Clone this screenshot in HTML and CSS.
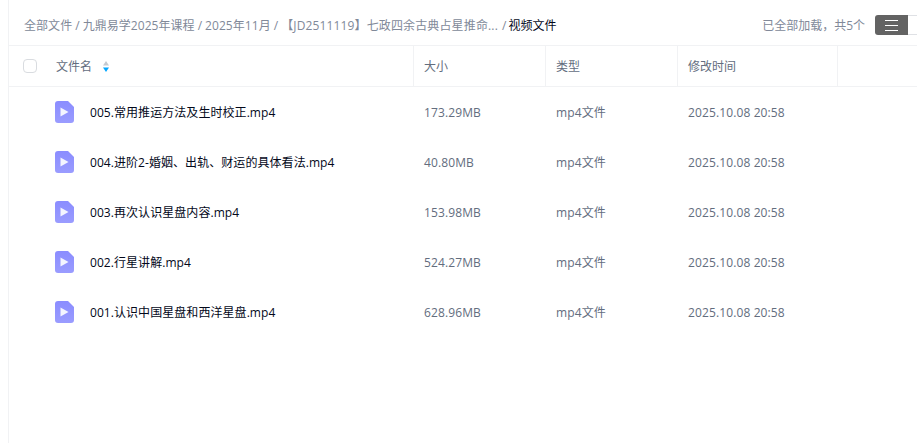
FILE: index.html
```html
<!DOCTYPE html>
<html lang="zh-CN">
<head>
<meta charset="utf-8">
<title>视频文件</title>
<link rel="stylesheet" href="styles.css">
</head>
<body>
<div class="panel">
  <div class="topbar">
    <div class="crumbs">
      <span>全部文件</span><i>/</i><span>九鼎易学2025年课程</span><i>/</i><span>2025年11月</span><i>/</i><span class="long">【JD2511119】七政四余古典占星推命...</span><i class="last">/</i><span class="current">视频文件</span>
    </div>
    <div class="status">已全部加载，共5个</div>
    <div class="switch">
      <div class="switch-on">
        <svg width="13" height="11" viewBox="0 0 13 11"><path d="M0 .5h13M0 5.5h13M0 10.5h13" stroke="#fff" stroke-width="1" fill="none"/></svg>
      </div>
      <div class="switch-off"></div>
    </div>
  </div>
  <div class="row head">
    <div class="cell name-head">
      <span class="check"></span>
      <span class="title">文件名</span>
      <svg class="sort" width="6" height="11" viewBox="0 0 6 11"><path d="M3 0 6 4.5H0z" fill="#c4c9cf"/><path d="M0 6.5h6L3 11z" fill="#06a7ff"/></svg>
    </div>
    <div class="cell">大小</div>
    <div class="cell">类型</div>
    <div class="cell">修改时间</div>
    <div class="cell end"></div>
  </div>
  <div class="list">
    <div class="row item">
      <div class="name"><svg class="ficon" width="19" height="22" viewBox="0 0 19 22"><use href="#video"/></svg><span>005.常用推运方法及生时校正.mp4</span></div>
      <div class="val">173.29MB</div><div class="val">mp4文件</div><div class="val">2025.10.08 20:58</div>
    </div>
    <div class="row item">
      <div class="name"><svg class="ficon" width="19" height="22" viewBox="0 0 19 22"><use href="#video"/></svg><span>004.进阶2-婚姻、出轨、财运的具体看法.mp4</span></div>
      <div class="val">40.80MB</div><div class="val">mp4文件</div><div class="val">2025.10.08 20:58</div>
    </div>
    <div class="row item">
      <div class="name"><svg class="ficon" width="19" height="22" viewBox="0 0 19 22"><use href="#video"/></svg><span>003.再次认识星盘内容.mp4</span></div>
      <div class="val">153.98MB</div><div class="val">mp4文件</div><div class="val">2025.10.08 20:58</div>
    </div>
    <div class="row item">
      <div class="name"><svg class="ficon" width="19" height="22" viewBox="0 0 19 22"><use href="#video"/></svg><span>002.行星讲解.mp4</span></div>
      <div class="val">524.27MB</div><div class="val">mp4文件</div><div class="val">2025.10.08 20:58</div>
    </div>
    <div class="row item">
      <div class="name"><svg class="ficon" width="19" height="22" viewBox="0 0 19 22"><use href="#video"/></svg><span>001.认识中国星盘和西洋星盘.mp4</span></div>
      <div class="val">628.96MB</div><div class="val">mp4文件</div><div class="val">2025.10.08 20:58</div>
    </div>
  </div>
</div>
<svg class="defs" width="0" height="0">
  <defs>
    <linearGradient id="vg" x1="0" y1="0" x2="0" y2="1"><stop offset="0" stop-color="#8b8dff"/><stop offset="1" stop-color="#9a9cff"/></linearGradient>
    <g id="video">
      <path d="M3 0h10l6 6v13a3 3 0 0 1-3 3H3a3 3 0 0 1-3-3V3a3 3 0 0 1 3-3z" fill="url(#vg)"/>
      <path d="M5.5 6.5v9l8-4.5z" fill="#fff" fill-opacity=".9"/>
    </g>
  </defs>
</svg>
</body>
</html>
```

FILE: styles.css
```css
* { box-sizing: border-box; }
html, body { margin: 0; padding: 0; height: 100%; overflow: hidden; background: #fff; }
body {
  font-family: "Open Sans", "Noto Sans CJK SC", sans-serif;
  font-size: 12px;
  color: #03081a;
}
.panel {
  margin-left: 8px;
  height: 100%;
  border-left: 1px solid #f1f2f4;
}
.topbar {
  height: 46px;
  display: flex;
  align-items: center;
  padding: 5px 0 0 15px;
  border-bottom: 1px solid #f1f2f4;
}
.crumbs {
  flex: 1;
  display: flex;
  align-items: center;
  color: #818999;
  white-space: nowrap;
  letter-spacing: .05px;
}
.crumbs i { font-style: normal; margin: 0 3px; }
.crumbs .long { letter-spacing: .14px; }
.crumbs .last { margin: 0 2px 0 4px; }
.crumbs .current { color: #03081a; }
.status { color: #818999; margin-right: 10px; }
.switch { display: flex; height: 20px; width: 42px; }
.switch-on {
  width: 33px;
  background: #636363;
  border-radius: 3px 0 0 3px;
  display: flex;
  align-items: center;
  justify-content: center;
}
.switch-off {
  flex: 1;
  border-top: 1px solid #dfe1e5;
  border-bottom: 1px solid #dfe1e5;
}
.row {
  display: grid;
  grid-template-columns: 405px 132px 132px 160px 1fr;
}
.head {
  height: 41px;
  border-bottom: 1px solid #f1f2f4;
  color: #636d7e;
  align-items: stretch;
}
.cell {
  display: flex;
  align-items: center;
  padding-left: 10px;
  border-right: 1px solid #f1f2f4;
}
.cell.end { border-right: 0; }
.name-head { padding-left: 14px; }
.check {
  width: 14px;
  height: 14px;
  border: 1px solid #d9dce0;
  border-radius: 4px;
}
.title { margin-left: 19px; }
.sort { margin-left: 11px; }
.item { height: 50px; align-items: center; }
.name { display: flex; align-items: center; padding-left: 46px; color: #03081a; letter-spacing: .06px; }
.ficon { margin-right: 16px; flex: none; }
.val { padding-left: 10px; color: #636d7e; letter-spacing: .12px; }
.defs { position: absolute; }
```
